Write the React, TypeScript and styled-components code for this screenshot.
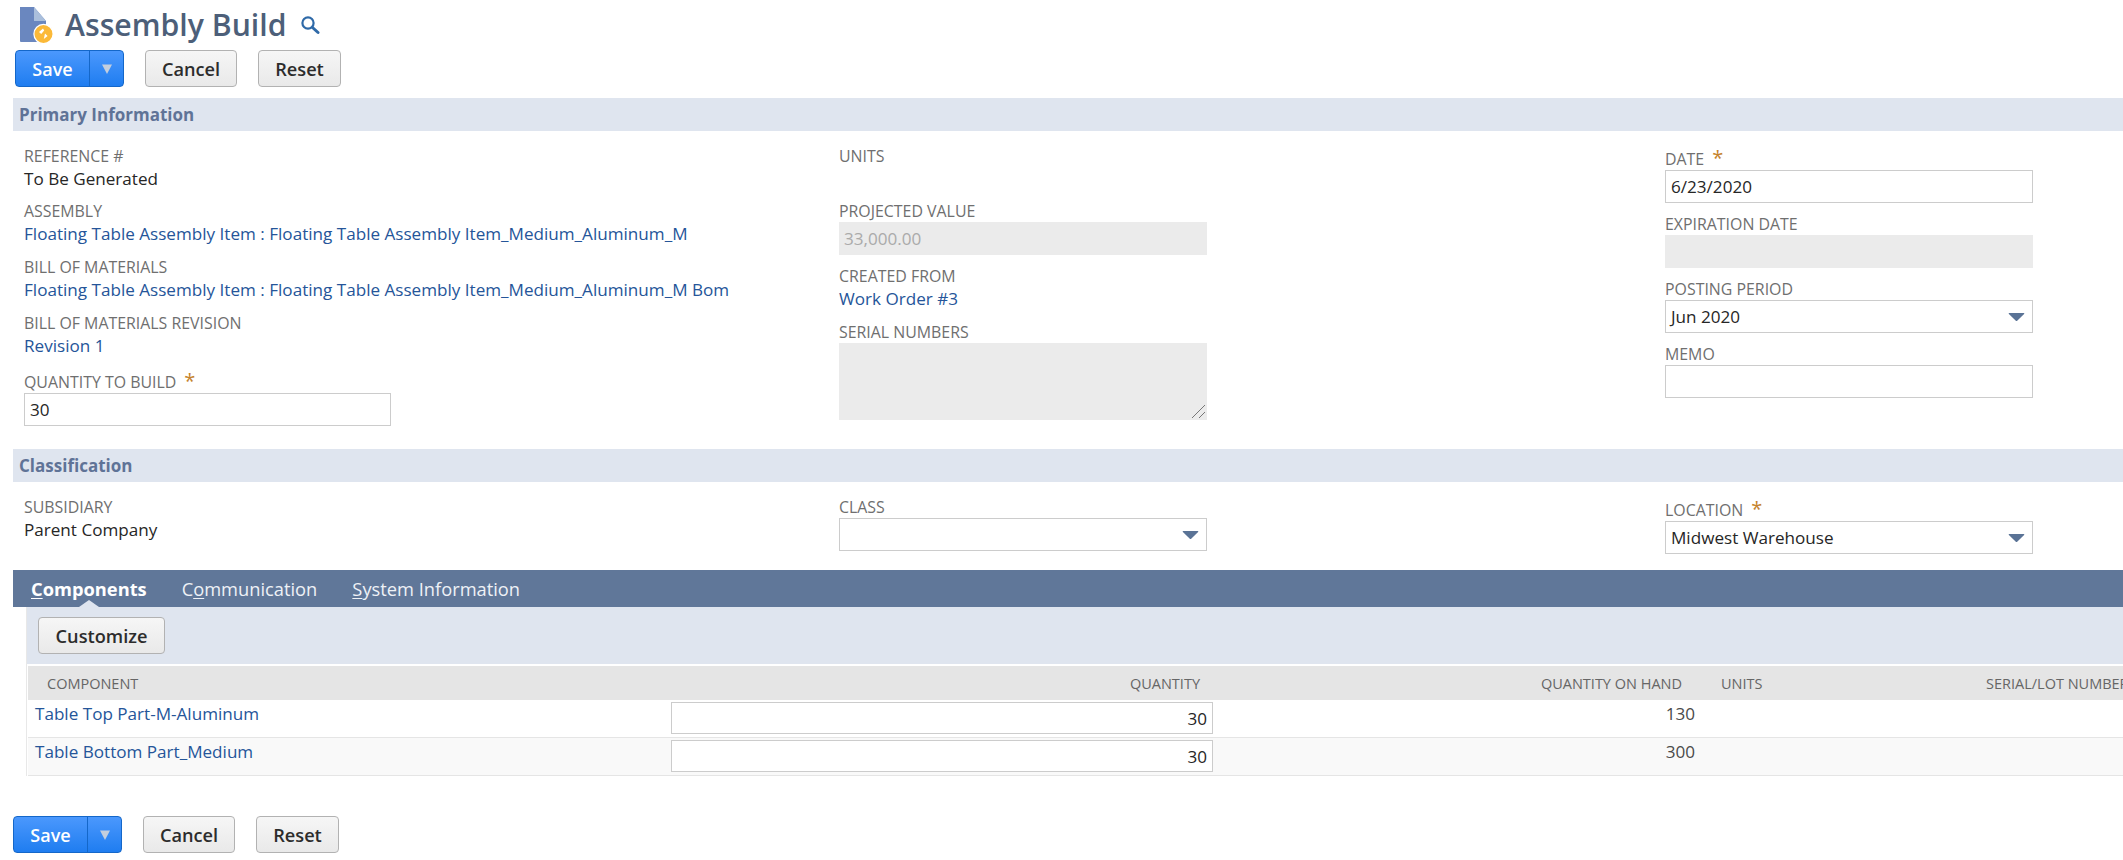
import React from 'react';
import styled, { createGlobalStyle } from 'styled-components';

const GlobalStyle = createGlobalStyle`
  html, body {
    margin: 0;
    padding: 0;
    background: #fff;
    overflow: hidden;
  }
  body {
    font-family: "Open Sans", "Noto Sans", sans-serif;
    font-size: 17.1px;
    color: #262626;
  }
`;

const Page = styled.div`
  width: 2123px;
  height: 860px;
  overflow: hidden;
`;

const TitleRow = styled.div`
  display: flex;
  align-items: center;
  height: 50px;
  padding-left: 19px;
`;

const Title = styled.h1`
  margin: 0 0 0 10px;
  font-size: 30.2px;
  font-weight: 600;
  line-height: 50px;
  color: #4d5f79;
`;

const SearchIcon = styled.svg`
  width: 20px;
  height: 20px;
  margin-left: 14px;
`;

const ButtonRow = styled.div<{ $left: number; $bottom?: number; $top?: number }>`
  display: flex;
  height: 37px;
  margin: ${p => p.$top || 0}px 0 ${p => p.$bottom || 0}px;
  padding-left: ${p => p.$left}px;
`;

const SaveGroup = styled.div`
  display: flex;
  width: 109px;
  height: 37px;
  box-sizing: border-box;
  border: 1px solid #1467c9;
  border-radius: 4px;
  background: linear-gradient(#4b98fd, #1f7df0);
  margin-right: 21px;
  color: #fff;
  font-weight: 600;
  font-size: 18px;
`;

const SaveLabel = styled.div`
  width: 73px;
  display: flex;
  align-items: center;
  justify-content: center;
  border-right: 1px solid #1467c9;
`;

const SaveArrow = styled.div`
  flex: 1;
  display: flex;
  align-items: center;
  justify-content: center;
`;

const GreyButton = styled.button<{ $width: number }>`
  width: ${p => p.$width}px;
  height: 37px;
  margin: 0 21px 0 0;
  padding: 0;
  border: 1px solid #b2b2b2;
  border-radius: 4px;
  background: linear-gradient(#f6f6f6, #e9e9e9);
  font-family: inherit;
  font-size: 18.2px;
  font-weight: 600;
  color: #2c2c2c;
`;

const SectionBar = styled.div`
  height: 33px;
  margin-left: 13px;
  padding-left: 6px;
  background: #dfe5ef;
  color: #5f7397;
  font-size: 17px;
  font-weight: 700;
  line-height: 33px;
`;

const FieldGrid = styled.div<{ $bottom: number }>`
  display: grid;
  grid-template-columns: 815px 826px 368px;
  padding: 14px 0 ${p => p.$bottom}px 24px;
`;

const Column = styled.div<{ $top?: number; $width?: number }>`
  padding-top: ${p => p.$top || 0}px;
  width: ${p => p.$width || 368}px;
`;

const Field = styled.div<{ $gap?: number }>`
  margin-bottom: ${p => p.$gap || 0}px;
`;

const Label = styled.div`
  height: 22px;
  line-height: 22px;
  font-size: 15.9px;
  color: #6f6f6f;
  white-space: nowrap;
`;

const Star = styled.span`
  color: #c5822b;
  font-size: 20px;
  line-height: 14px;
  margin-left: 8px;
`;

const Value = styled.div`
  height: 22px;
  line-height: 24px;
  white-space: nowrap;
`;

const LinkValue = styled(Value)`
  color: #255599;
`;

const Box = styled.div<{ $disabled?: boolean; $height?: number }>`
  position: relative;
  display: flex;
  align-items: center;
  justify-content: space-between;
  box-sizing: border-box;
  height: ${p => p.$height || 33}px;
  padding: 0 5px;
  border: ${p => (p.$disabled ? '0' : '1px solid #ccc')};
  background: ${p => (p.$disabled ? '#ebebeb' : '#fff')};
  color: ${p => (p.$disabled ? '#aaa' : '#262626')};
`;

const Arrow = styled.svg`
  width: 17px;
  height: 10px;
  margin-right: 2px;
`;

const Grip = styled.svg`
  position: absolute;
  right: 1px;
  bottom: 1px;
  width: 15px;
  height: 15px;
`;

const TabBar = styled.div`
  display: flex;
  gap: 35px;
  height: 37px;
  margin-left: 13px;
  padding-left: 18px;
  background: #607799;
  color: #fff;
  font-size: 18.3px;
  line-height: 37px;
`;

const Tab = styled.div<{ $active?: boolean }>`
  position: relative;
  font-weight: ${p => (p.$active ? 700 : 400)};
  color: ${p => (p.$active ? '#fff' : '#eef1f6')};
  u {
    text-underline-offset: 2px;
  }
  ${p =>
    p.$active &&
    `&::after {
      content: "";
      position: absolute;
      left: 50%;
      bottom: 0;
      margin-left: -10px;
      border-left: 10px solid transparent;
      border-right: 10px solid transparent;
      border-bottom: 7px solid #dfe5ef;
    }`}
`;

const TabPanel = styled.div`
  margin-left: 26px;
  border-left: 1px solid #e8e8e8;
`;

const PanelTools = styled.div`
  height: 57px;
  box-sizing: border-box;
  padding: 10px 0 0 11px;
  background: #dfe5ef;
`;

const CustomizeButton = styled(GreyButton)`
  margin: 0;
`;

const HeaderRow = styled.div`
  display: grid;
  grid-template-columns: 643px 529px 482px 265px 1fr;
  align-items: center;
  height: 34px;
  margin: 2px 0 0 1px;
  background: #e5e5e5;
  font-size: 14.5px;
  color: #666;
  white-space: nowrap;
  overflow: hidden;
`;

const HeaderCell = styled.div<{ $right?: boolean; $pad?: number }>`
  text-align: ${p => (p.$right ? 'right' : 'left')};
  padding: ${p => (p.$right ? `0 ${p.$pad}px 0 0` : `0 0 0 ${p.$pad}px`)};
`;

const Row = styled.div<{ $alt?: boolean }>`
  display: grid;
  grid-template-columns: 643px 542px 482px 1fr;
  height: 38px;
  box-sizing: border-box;
  margin-left: 1px;
  border-bottom: 1px solid #e5e5e5;
  background: ${p => (p.$alt ? '#f9f9f9' : '#fff')};
`;

const ItemLink = styled.div`
  padding: 3px 0 0 7px;
  color: #255599;
  line-height: 22px;
`;

const QtyInput = styled.div`
  display: flex;
  align-items: center;
  justify-content: flex-end;
  box-sizing: border-box;
  height: 32px;
  margin: 2px 0 0 0;
  padding-right: 5px;
  border: 1px solid #ccc;
  background: #fff;
`;

const OnHand = styled.div`
  padding: 3px 0 0 0;
  text-align: right;
  line-height: 22px;
  color: #4a4a4a;
`;

const DocIcon = () => (
  <svg width="36" height="38" viewBox="0 0 36 38">
    <path d="M1 1h14l12 14v20a1 1 0 0 1-1 1H2a1 1 0 0 1-1-1z" fill="#6a87bf" />
    <path d="M15 1l12 14H15z" fill="#aabfdc" />
    <circle cx="24.5" cy="28" r="9.6" fill="#fbb938" stroke="#fff" strokeWidth="1.2" />
    <path d="M24 22.5l-4 3.6 2.2 1.9 3-3.4zM26 27.5l-1.2 5.6 3.8-3z" fill="#fff" />
  </svg>
);

const SelectArrow = () => (
  <Arrow viewBox="0 0 17 10">
    <path d="M1.5 1h14c.8 0 1 .6.6 1.1L9.2 8.8c-.4.4-1 .4-1.4 0L.9 2.1C.5 1.6.7 1 1.5 1z" fill="#5a7396" />
  </Arrow>
);

const ButtonBar = ({ left, top, bottom }: { left: number; top?: number; bottom?: number }) => (
  <ButtonRow $left={left} $top={top} $bottom={bottom}>
    <SaveGroup>
      <SaveLabel>Save</SaveLabel>
      <SaveArrow>
        <svg width="12" height="12" viewBox="0 0 12 12">
          <path d="M1 1.5h10L6 11z" fill="#c3cedd" />
        </svg>
      </SaveArrow>
    </SaveGroup>
    <GreyButton $width={92}>Cancel</GreyButton>
    <GreyButton $width={83}>Reset</GreyButton>
  </ButtonRow>
);

const Req = () => <Star>*</Star>;

const App: React.FC = () => {
  return (
    <Page>
      <GlobalStyle />
      <TitleRow>
        <DocIcon />
        <Title>Assembly Build</Title>
        <SearchIcon viewBox="0 0 20 20">
          <circle cx="8" cy="8" r="5.6" fill="none" stroke="#2f6aa8" strokeWidth="2.2" />
          <path d="M12.5 12.5l5.5 5" stroke="#2f6aa8" strokeWidth="3" strokeLinecap="round" />
        </SearchIcon>
      </TitleRow>
      <ButtonBar left={15} bottom={11} />
      <SectionBar>Primary Information</SectionBar>
      <FieldGrid $bottom={23}>
        <Column $width={367}>
          <Field $gap={11}>
            <Label>REFERENCE #</Label>
            <Value>To Be Generated</Value>
          </Field>
          <Field $gap={12}>
            <Label>ASSEMBLY</Label>
            <LinkValue>Floating Table Assembly Item : Floating Table Assembly Item_Medium_Aluminum_M</LinkValue>
          </Field>
          <Field $gap={12}>
            <Label>BILL OF MATERIALS</Label>
            <LinkValue>Floating Table Assembly Item : Floating Table Assembly Item_Medium_Aluminum_M Bom</LinkValue>
          </Field>
          <Field $gap={15}>
            <Label>BILL OF MATERIALS REVISION</Label>
            <LinkValue>Revision 1</LinkValue>
          </Field>
          <Field>
            <Label>QUANTITY TO BUILD<Req /></Label>
            <Box>30</Box>
          </Field>
        </Column>
        <Column>
          <Field $gap={11}>
            <Label>UNITS</Label>
            <Value />
          </Field>
          <Field $gap={10}>
            <Label>PROJECTED VALUE</Label>
            <Box $disabled>33,000.00</Box>
          </Field>
          <Field $gap={12}>
            <Label>CREATED FROM</Label>
            <LinkValue>Work Order #3</LinkValue>
          </Field>
          <Field>
            <Label>SERIAL NUMBERS</Label>
            <Box $disabled $height={77}>
              <Grip viewBox="0 0 15 15">
                <path d="M1 14L14 1M8 14l6-6" stroke="#777" strokeWidth="1" fill="none" />
              </Grip>
            </Box>
          </Field>
        </Column>
        <Column $top={3}>
          <Field $gap={10}>
            <Label>DATE<Req /></Label>
            <Box>6/23/2020</Box>
          </Field>
          <Field $gap={10}>
            <Label>EXPIRATION DATE</Label>
            <Box $disabled />
          </Field>
          <Field $gap={10}>
            <Label>POSTING PERIOD</Label>
            <Box>Jun 2020<SelectArrow /></Box>
          </Field>
          <Field>
            <Label>MEMO</Label>
            <Box />
          </Field>
        </Column>
      </FieldGrid>
      <SectionBar>Classification</SectionBar>
      <FieldGrid $bottom={16}>
        <Column>
          <Label>SUBSIDIARY</Label>
          <Value>Parent Company</Value>
        </Column>
        <Column>
          <Label>CLASS</Label>
          <Box><span /><SelectArrow /></Box>
        </Column>
        <Column $top={3}>
          <Label>LOCATION<Req /></Label>
          <Box>Midwest Warehouse<SelectArrow /></Box>
        </Column>
      </FieldGrid>
      <TabBar>
        <Tab $active><u>C</u>omponents</Tab>
        <Tab>C<u>o</u>mmunication</Tab>
        <Tab><u>S</u>ystem Information</Tab>
      </TabBar>
      <TabPanel>
        <PanelTools>
          <CustomizeButton $width={127}>Customize</CustomizeButton>
        </PanelTools>
        <HeaderRow>
          <HeaderCell $pad={19}>COMPONENT</HeaderCell>
          <HeaderCell $right $pad={0}>QUANTITY</HeaderCell>
          <HeaderCell $right $pad={0}>QUANTITY ON HAND</HeaderCell>
          <HeaderCell $pad={39}>UNITS</HeaderCell>
          <HeaderCell $pad={39}>SERIAL/LOT NUMBERS</HeaderCell>
        </HeaderRow>
        <Row>
          <ItemLink>Table Top Part-M-Aluminum</ItemLink>
          <QtyInput>30</QtyInput>
          <OnHand>130</OnHand>
        </Row>
        <Row $alt>
          <ItemLink>Table Bottom Part_Medium</ItemLink>
          <QtyInput>30</QtyInput>
          <OnHand>300</OnHand>
        </Row>
      </TabPanel>
      <ButtonBar left={13} top={40} />
    </Page>
  );
};

export default App;
